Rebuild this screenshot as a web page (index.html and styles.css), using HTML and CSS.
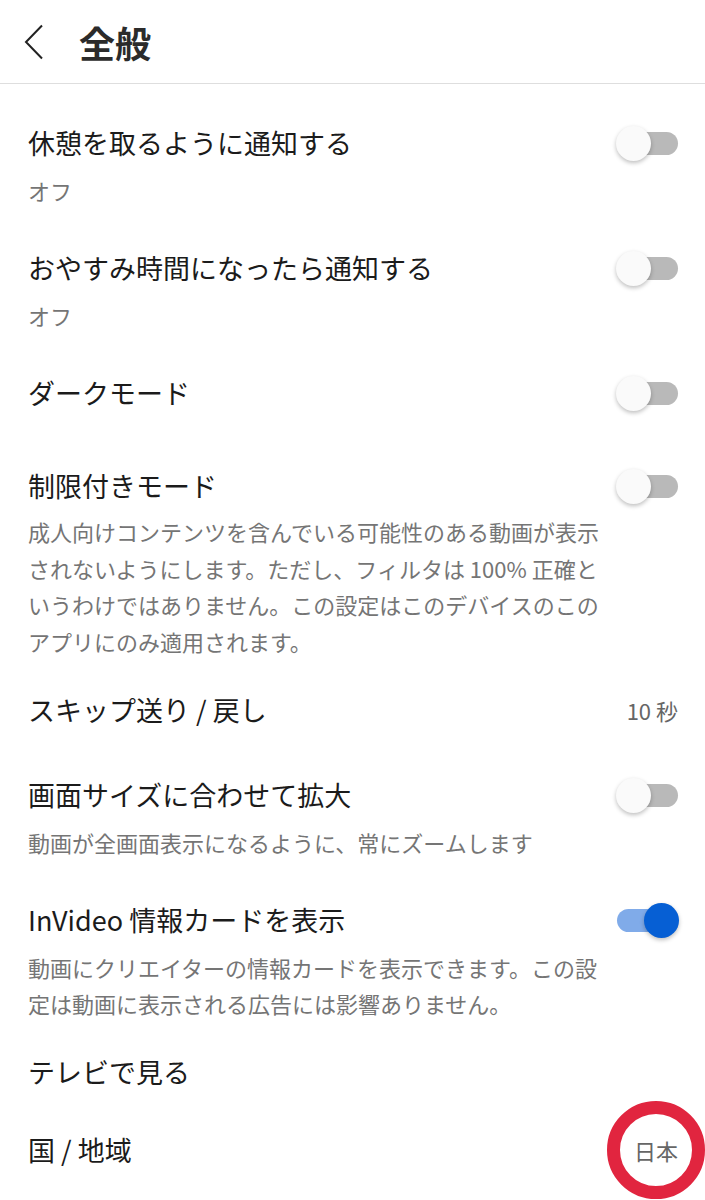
FILE: index.html
```html
<!DOCTYPE html>
<html lang="ja">
<head>
    <meta charset="UTF-8">
    <meta name="viewport" content="width=device-width, initial-scale=1.0">
    <title>全般</title>
    <link rel="stylesheet" href="styles.css">
</head>
<body>
    <header class="app-bar">
        <button class="back" aria-label="戻る">
            <svg width="20" height="36" viewBox="0 0 20 36">
                <polyline points="18,1.5 2,18 18,34.5" fill="none" stroke="#222" stroke-width="2" />
            </svg>
        </button>
        <h1>全般</h1>
    </header>

    <main class="settings">
        <div class="item">
            <div class="item-head">
                <span class="label">休憩を取るように通知する</span>
                <span class="switch"><span class="thumb"></span></span>
            </div>
            <p class="note">オフ</p>
        </div>

        <div class="item">
            <div class="item-head">
                <span class="label">おやすみ時間になったら通知する</span>
                <span class="switch"><span class="thumb"></span></span>
            </div>
            <p class="note">オフ</p>
        </div>

        <div class="item spaced">
            <div class="item-head">
                <span class="label">ダークモード</span>
                <span class="switch"><span class="thumb"></span></span>
            </div>
        </div>

        <div class="item tight">
            <div class="item-head">
                <span class="label">制限付きモード</span>
                <span class="switch"><span class="thumb"></span></span>
            </div>
            <p class="note long">成人向けコンテンツを含んでいる可能性のある動画が表示<br>されないようにします。ただし、フィルタは 100% 正確と<br>いうわけではありません。この設定はこのデバイスのこの<br>アプリにのみ適用されます。</p>
        </div>

        <div class="item value-row">
            <div class="item-head">
                <span class="label">スキップ送り / 戻し</span>
                <span class="value">10 秒</span>
            </div>
        </div>

        <div class="item">
            <div class="item-head">
                <span class="label">画面サイズに合わせて拡大</span>
                <span class="switch"><span class="thumb"></span></span>
            </div>
            <p class="note">動画が全画面表示になるように、常にズームします</p>
        </div>

        <div class="item tight">
            <div class="item-head">
                <span class="label">InVideo 情報カードを表示</span>
                <span class="switch on"><span class="thumb"></span></span>
            </div>
            <p class="note">動画にクリエイターの情報カードを表示できます。この設<br>定は動画に表示される広告には影響ありません。</p>
        </div>

        <div class="item">
            <div class="item-head">
                <span class="label">テレビで見る</span>
            </div>
        </div>

        <div class="item">
            <div class="item-head">
                <span class="label">国 / 地域</span>
                <span class="value circled">日本<span class="ring"></span></span>
            </div>
        </div>
    </main>
</body>
</html>
```

FILE: styles.css
```css
body {
    margin: 0;
    font-family: "Noto Sans CJK JP", "Noto Sans", sans-serif;
    background-color: #fff;
    color: #1b1b1b;
    height: 1200px;
    overflow: hidden;
}

.app-bar {
    display: flex;
    align-items: center;
    height: 83px;
    padding-left: 24px;
    border-bottom: 1px solid #dedede;
}

.back {
    display: flex;
    padding: 0;
    border: none;
    background: none;
}

.app-bar h1 {
    margin: 0 0 0 35px;
    font-size: 36px;
    font-weight: bold;
    color: #2b2b2b;
}

.settings {
    padding: 20px 27px 0 28px;
}

.item {
    padding: 21px 0;
}

.item.spaced {
    padding-bottom: 36px;
}

.item.value-row {
    padding-bottom: 28px;
}

.item.tight {
    padding-bottom: 12px;
}

.item-head {
    display: flex;
    align-items: center;
    justify-content: space-between;
    height: 36px;
}

.label {
    font-size: 27px;
    line-height: 36px;
}

.note {
    margin: 11px 0 0;
    font-size: 22px;
    line-height: 36px;
    color: #757575;
}

.note.long {
    margin-top: 9px;
    line-height: 36.5px;
}

.value {
    font-size: 22px;
    color: #666;
}

/* switch */
.switch {
    position: relative;
    width: 61px;
    height: 23px;
    border-radius: 12px;
    background-color: #b9b9b9;
}

.switch .thumb {
    position: absolute;
    top: -6px;
    left: -1px;
    width: 35px;
    height: 35px;
    border-radius: 50%;
    background-color: #fafafa;
    box-shadow: 0 2px 4px rgba(0, 0, 0, 0.25);
}

.switch.on {
    background-color: #80abe9;
}

.switch.on .thumb {
    left: 27px;
    background-color: #065fd4;
}

/* annotation ring */
.circled {
    position: relative;
}

.ring {
    position: absolute;
    left: 50%;
    top: 50%;
    width: 72px;
    height: 72px;
    border: 13px solid #e1253f;
    border-radius: 50%;
    transform: translate(-50%, -50%);
}
```
